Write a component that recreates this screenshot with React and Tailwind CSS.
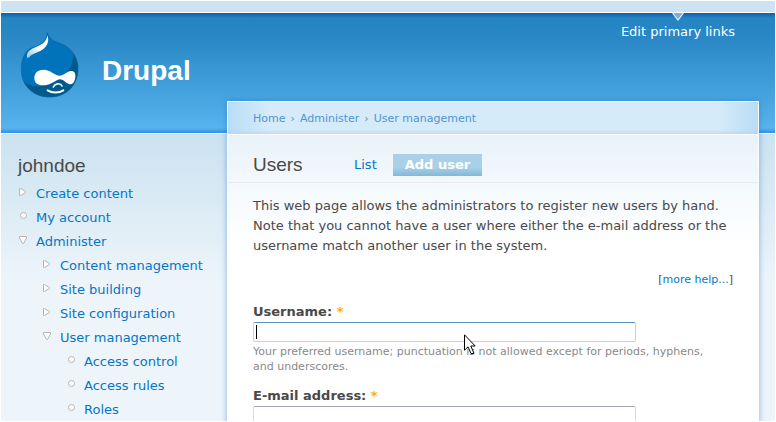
import React, { useState } from "react";

const menu = [
    {
        title: "Create content",
        type: "collapsed"
    },
    {
        title: "My account",
        type: "leaf"
    },
    {
        title: "Administer",
        type: "expanded",
        children: [
            { title: "Content management", type: "collapsed" },
            { title: "Site building", type: "collapsed" },
            { title: "Site configuration", type: "collapsed" },
            {
                title: "User management",
                type: "expanded",
                children: [
                    { title: "Access control", type: "leaf" },
                    { title: "Access rules", type: "leaf" },
                    { title: "Roles", type: "leaf" }
                ]
            }
        ]
    }
];

const dropPath = "M142 98 C147 115 158 123 180 130 C214 142 234 172 234 206 C234 256 198 291 149 291 C100 291 64 256 64 209 C64 182 72 162 84 150 C92 144 102 141 112 137 C132 128 141 118 142 98 Z";

function Bullet({ type }) {
    return (
        <svg className="w-3 h-3 mt-1 shrink-0" viewBox="0 0 12 12" fill="#fff" stroke="#b4b4b4" aria-hidden="true">
            {type === "collapsed" && <path d="M1.5 2.5 V9.5 H2.5 L7.5 6.5 V5.5 L2.5 2.5 Z" />}
            {type === "expanded" && <path d="M1.5 2.5 H8.5 V4 L5.5 9.5 H4.5 L1.5 4 Z" />}
            {type === "leaf" && <circle cx="5.5" cy="5.5" r="3" />}
        </svg>
    );
}

function MenuList({ items }) {
    return (
        <ul>
            {items.map((item) => (
                <li key={item.title}>
                    <div className="flex gap-1.5 h-6">
                        <Bullet type={item.type} />
                        <a href="#" className="leading-6 whitespace-nowrap text-[#0576c4] hover:underline">{item.title}</a>
                    </div>
                    {item.children && (
                        <div className="pl-6">
                            <MenuList items={item.children} />
                        </div>
                    )}
                </li>
            ))}
        </ul>
    );
}

function Logo() {
    return (
        <svg className="w-[60px] h-[66px]" viewBox="60 96 180 198" role="img" aria-label="Drupal">
            <defs>
                <linearGradient id="shine" x1="1" y1="0" x2="0.3" y2="1">
                    <stop offset="0.6" stopColor="#fff" />
                    <stop offset="1" stopColor="#a9d0ec" />
                </linearGradient>
                <clipPath id="drop">
                    <path d={dropPath} />
                </clipPath>
            </defs>
            <g clipPath="url(#drop)">
                <rect x="60" y="96" width="180" height="198" fill="#0073ba" />
                <path d="M220 156 C222 200 194 240 146 254 C116 262 90 261 70 244 L80 294 H240 V160 Z" fill="#005a8c" />
            </g>
            <path d={dropPath} fill="none" stroke="#0a5d95" strokeWidth="2" />
            <path d="M142 106 C148 122 144 138 127 149 C111 159 94 161 88 171 C84 176 79 173 81 164 C85 150 99 145 113 139 C130 132 140 122 142 106 Z" fill="url(#shine)" />
            <path d="M131 209 C151 209 163 226 180 227 C194 226 200 213 213 213 C226 212 228 225 225 238 C222 250 215 255 206 252 C196 248 189 238 180 238 C167 239 155 255 132 256 C114 257 103 249 103 234 C103 217 115 209 131 209 Z" fill="#fff" />
            <path d="M160 261 C164 251 181 247 186 258" fill="none" stroke="#fff" strokeWidth="5" strokeLinecap="round" />
            <path d="M143 271 C156 279 176 280 190 271" fill="none" stroke="#fff" strokeWidth="6" strokeLinecap="round" />
        </svg>
    );
}

function Pointer() {
    return (
        <svg className="absolute left-[211px] top-3 w-3 h-[21px] pointer-events-none" viewBox="0 0 12 21" aria-hidden="true">
            <path d="M0.5 0.8 V16.2 L4 12.8 L7 19.5 H9.5 V18.2 L6.8 12 H11.2 Z" fill="#fff" stroke="#000" />
        </svg>
    );
}

function Required() {
    return <span className="text-[#ffae00]" title="This field is required.">*</span>;
}

export default function App() {
    const [username, setUsername] = useState("");
    const [email, setEmail] = useState("");

    return (
        <div className="h-screen overflow-hidden border border-white bg-[#edf5fa] flex flex-col font-['DejaVu_Sans',Verdana,sans-serif] text-[13px] text-[#494949]">
            {/* Region strip */}
            <div className="h-[11px] shrink-0 bg-[#cde3f1]"></div>

            <header className="h-[122px] shrink-0 border-y border-white bg-[linear-gradient(to_bottom,#1a5aa8_0px,#2385c2_5px,#2987c5_24px,#48a5e0_86px,#57b3ee_115px,#3390e6_120px)] flex items-start justify-between pl-[19px] pr-10">
                <div className="flex items-center pt-[19px] gap-[22px]">
                    <a href="#"><Logo /></a>
                    <h1 className="text-[28px] leading-8 mt-3 font-bold text-white font-['Liberation_Sans',Helvetica,sans-serif]">
                        <a href="#">Drupal</a>
                    </h1>
                </div>
                <nav className="flex flex-col items-center">
                    <svg className="w-3 h-2" viewBox="0 0 12 8" aria-hidden="true">
                        <path d="M0.5 0 L6 7 L11.5 0" fill="#7aaedb" stroke="#e6f1fa" strokeWidth="1.2" />
                    </svg>
                    <a href="#" className="leading-[22px] text-white">Edit primary links</a>
                </nav>
            </header>

            <div className="flex-1 flex bg-[linear-gradient(to_bottom,#cbe2f0_0px,#edf5fa_150px)]">
                <aside className="w-[226px] shrink-0 pl-[17px] pt-4">
                    <h2 className="text-[19px] leading-8 font-['Liberation_Sans',Helvetica,sans-serif]">johndoe</h2>
                    <MenuList items={menu} />
                </aside>

                <main className="relative flex-1 min-w-0 mr-4 -mt-[33px] border-x border-t border-white bg-white shadow-[0_0_6px_#1c6ed080]">
                    <div className="h-8 pl-[25px] pt-0.5 flex items-center text-[11px] text-[#5294d4] bg-[linear-gradient(to_right,#b8ddf5_0px,#d5ebf9_40px,#d5ebf9_calc(100%-40px),#b8ddf5_100%)] shadow-[inset_0_-4px_4px_-3px_#b8d0f0]">
                        <nav aria-label="Breadcrumb" className="flex gap-[5px]">
                            <a href="#">Home</a>
                            <span>›</span>
                            <a href="#">Administer</a>
                            <span>›</span>
                            <a href="#">User management</a>
                        </nav>
                    </div>

                    <div className="border-t border-white bg-[linear-gradient(to_bottom,#e9f2f9_0px,#f5fafd_60px,#ffffff_110px)]">
                        <div className="h-12 pl-[25px] pt-3 flex items-center border-b border-[#e4edf2]">
                            <h2 className="w-[89px] text-[19px] leading-7 font-['Liberation_Sans',Helvetica,sans-serif]">Users</h2>
                            <ul className="flex gap-1">
                                <li><a href="#" className="block px-3 leading-[22px] text-[#0576c4]">List</a></li>
                                <li><a href="#" className="block px-3 leading-[22px] font-bold text-white bg-[linear-gradient(to_bottom,#a9d0e8_60%,#83b7da)]">Add user</a></li>
                            </ul>
                        </div>

                        <div className="px-[25px] pt-[13px]">
                            <p className="leading-5">
                                This web page allows the administrators to register new users by hand. Note that you cannot have a user where either the e-mail address or the username match another user in the system.
                            </p>
                            <div className="mt-4 text-right text-[11px] leading-4">
                                [<a href="#" className="text-[#0576c4]">more help...</a>]
                            </div>

                            <form className="mt-3.5">
                                <label htmlFor="username" className="block leading-5 font-bold">
                                    Username: <Required />
                                </label>
                                <div className="relative">
                                    <input
                                        id="username"
                                        type="text"
                                        value={username}
                                        onChange={(e) => setUsername(e.target.value)}
                                        className="block w-[383px] max-w-full h-5 px-1 bg-white border border-[#b8d6eb] border-t-[#5a94bf] rounded-[2px] caret-transparent outline-none"
                                    />
                                    <span className="absolute left-[3px] top-[3px] w-px h-3.5 bg-black"></span>
                                    <Pointer />
                                </div>
                                <p className="mt-0.5 pr-4 text-[11px] leading-[15px] text-[#898989]">
                                    Your preferred username; punctuation is not allowed except for periods, hyphens, and underscores.
                                </p>

                                <label htmlFor="email" className="block mt-3 leading-5 font-bold">
                                    E-mail address: <Required />
                                </label>
                                <input
                                    id="email"
                                    type="text"
                                    value={email}
                                    onChange={(e) => setEmail(e.target.value)}
                                    className="block w-[383px] max-w-full h-5 px-1 bg-white border border-[#d9d9df] border-t-[#a5a6ae] rounded-[2px] outline-none"
                                />
                            </form>
                        </div>
                    </div>
                </main>
            </div>
        </div>
    );
}
